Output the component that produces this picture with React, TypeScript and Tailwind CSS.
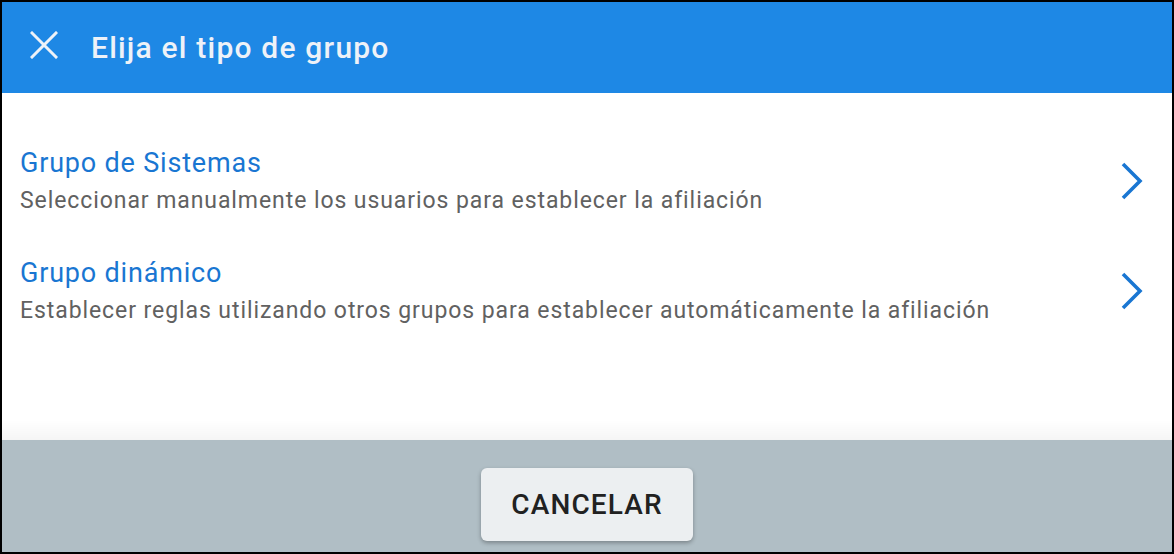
const groupTypes = [
  {
    title: "Grupo de Sistemas",
    description: "Seleccionar manualmente los usuarios para establecer la afiliación",
  },
  {
    title: "Grupo dinámico",
    description:
      "Establecer reglas utilizando otros grupos para establecer automáticamente la afiliación",
  },
];

export default function App() {
  return (
    <div
      className="flex h-[554px] w-[1174px] flex-col overflow-hidden border-2 border-black bg-white"
      style={{ fontFamily: "Roboto, 'Liberation Sans', sans-serif" }}
    >
      <header className="flex h-[91px] shrink-0 items-center bg-[#1e88e5] pl-[28px] text-[#eef2f8]">
        <button type="button" className="mb-[5px] flex h-[28px] w-[28px] items-center justify-center">
          <svg width="28" height="28" viewBox="0 0 28 28" fill="none">
            <path d="M2 2l24 24M26 2L2 26" stroke="currentColor" strokeWidth="3" strokeLinecap="square" />
          </svg>
        </button>
        <h1 className="ml-[33px] text-[30px] leading-[36px] font-medium tracking-[0.04em]">
          Elija el tipo de grupo
        </h1>
      </header>

      <div className="flex flex-1 flex-col pt-[33px]">
        {groupTypes.map((group) => (
          <button
            key={group.title}
            type="button"
            className="flex h-[110px] w-full items-center justify-between pl-[18px] pr-[28px] text-left"
          >
            <div className="flex flex-col">
              <span className="text-[27px] leading-[32px] tracking-[0.03em] text-[#1976d2]">
                {group.title}
              </span>
              <span className="mt-2 text-[23px] leading-[28px] tracking-[0.04em] text-[#616161]">
                {group.description}
              </span>
            </div>
            <svg width="24" height="40" viewBox="0 0 24 40" fill="none" className="text-[#1976d2]">
              <path d="M3 3l17 17L3 37" stroke="currentColor" strokeWidth="3.6" />
            </svg>
          </button>
        ))}
      </div>

      <footer className="relative flex h-[112px] shrink-0 justify-center bg-[#b0bec5] pt-[28px]">
        <div className="pointer-events-none absolute -top-5 left-0 right-0 h-5 bg-gradient-to-b from-transparent to-black/[0.04]" />
        <button
          type="button"
          className="h-[73px] w-[212px] rounded-[6px] bg-[#eceff1] text-[28px] font-medium tracking-[0.04em] text-[#212121] shadow-[0_2px_4px_rgba(0,0,0,0.3)]"
        >
          CANCELAR
        </button>
      </footer>
    </div>
  );
}
